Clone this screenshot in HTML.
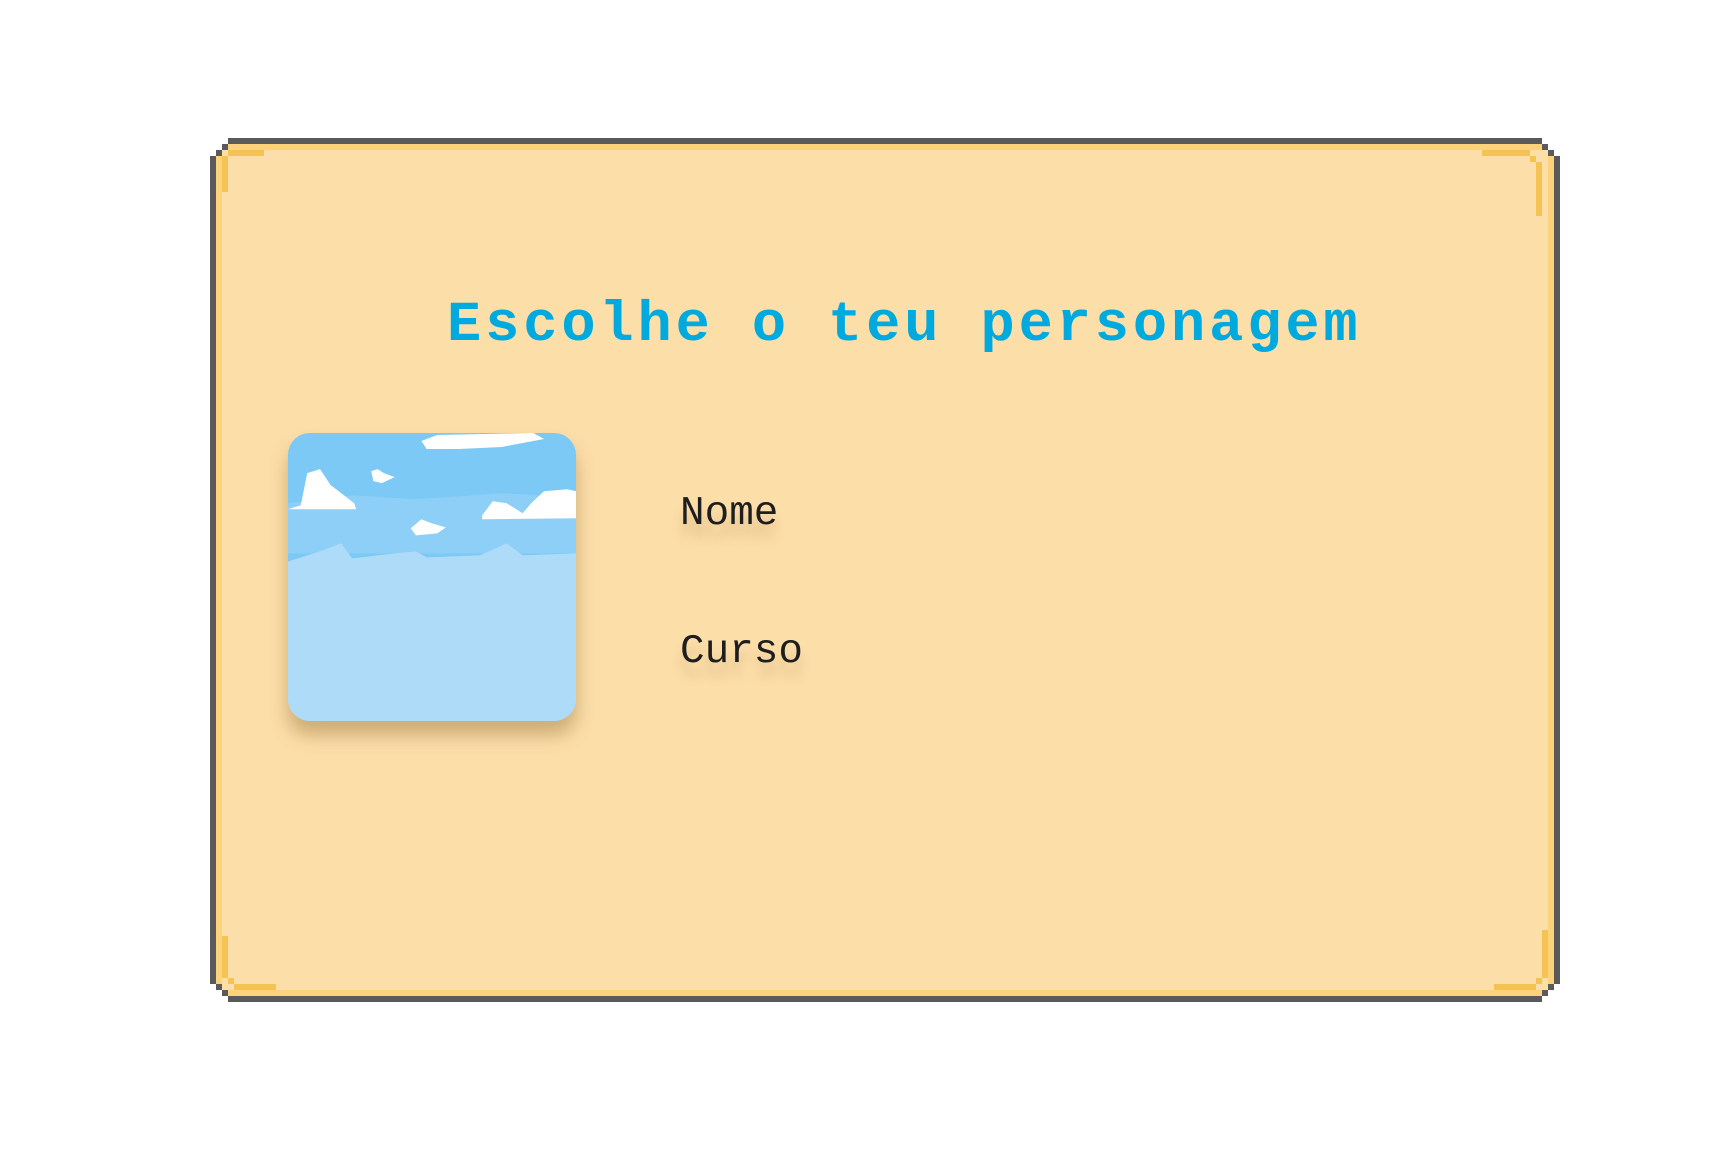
<!DOCTYPE html>
<html><head><meta charset="utf-8"><style>
html,body{margin:0;padding:0;background:#fff;width:1728px;height:1152px;overflow:hidden;position:relative;font-family:"Liberation Mono",monospace}
.card{position:absolute;left:210px;top:138px;width:1350px;height:864px;background:#5a5a5a;
clip-path:polygon(0 18px,6px 18px,6px 12px,12px 12px,12px 6px,18px 6px,18px 0,calc(100% - 18px) 0,calc(100% - 18px) 6px,calc(100% - 12px) 6px,calc(100% - 12px) 12px,calc(100% - 6px) 12px,calc(100% - 6px) 18px,100% 18px,100% calc(100% - 18px),calc(100% - 6px) calc(100% - 18px),calc(100% - 6px) calc(100% - 12px),calc(100% - 12px) calc(100% - 12px),calc(100% - 12px) calc(100% - 6px),calc(100% - 18px) calc(100% - 6px),calc(100% - 18px) 100%,18px 100%,18px calc(100% - 6px),12px calc(100% - 6px),12px calc(100% - 12px),6px calc(100% - 12px),6px calc(100% - 18px),0 calc(100% - 18px))}
.l1{position:absolute;left:6px;top:6px;right:6px;bottom:6px;background:#fdd27a;
clip-path:polygon(0 12px,6px 12px,6px 6px,12px 6px,12px 0,calc(100% - 12px) 0,calc(100% - 12px) 6px,calc(100% - 6px) 6px,calc(100% - 6px) 12px,100% 12px,100% calc(100% - 12px),calc(100% - 6px) calc(100% - 12px),calc(100% - 6px) calc(100% - 6px),calc(100% - 12px) calc(100% - 6px),calc(100% - 12px) 100%,12px 100%,12px calc(100% - 6px),6px calc(100% - 6px),6px calc(100% - 12px),0 calc(100% - 12px))}
.l2{position:absolute;left:12px;top:12px;right:12px;bottom:12px;background:#fcdea9}
.acc{position:absolute;background:#f5c354}
.title{position:absolute;left:447px;top:294px;font-size:57px;font-weight:bold;color:#00aade;letter-spacing:3.9px;white-space:nowrap}
.img{position:absolute;left:288px;top:433px;width:288px;height:288px;border-radius:22px;overflow:hidden;background:#aedcf8;box-shadow:0 14px 18px rgba(150,110,50,.45)}
.lbl{position:absolute;font-size:41px;color:#1e1e1e;text-shadow:0 14px 10px rgba(180,140,80,.35)}
</style></head><body>
<div class="card"><div class="l1"></div><div class="l2"></div></div>
<div class="acc" style="left:228px;top:150px;width:36px;height:6px"></div>
<div class="acc" style="left:222px;top:156px;width:6px;height:36px"></div>
<div class="acc" style="left:1482px;top:150px;width:48px;height:6px"></div>
<div class="acc" style="left:1530px;top:156px;width:6px;height:6px"></div>
<div class="acc" style="left:1536px;top:162px;width:6px;height:54px"></div>
<div class="acc" style="left:222px;top:936px;width:6px;height:42px"></div>
<div class="acc" style="left:228px;top:978px;width:6px;height:6px"></div>
<div class="acc" style="left:234px;top:984px;width:42px;height:6px"></div>
<div class="acc" style="left:1542px;top:930px;width:6px;height:48px"></div>
<div class="acc" style="left:1536px;top:978px;width:6px;height:6px"></div>
<div class="acc" style="left:1494px;top:984px;width:42px;height:6px"></div>
<div class="title">Escolhe o teu personagem</div>
<div class="img">
<svg width="288" height="288" viewBox="0 0 270 287" preserveAspectRatio="none">
<rect width="270" height="130" fill="#7bc9f4"/>
<path d="M0 70 L60 62 L120 66 L200 60 L270 64 L270 120 L0 120Z" fill="#8ecff7"/>
<path d="M0 128 L30 118 L50 110 L60 125 L100 120 L120 118 L130 124 L180 122 L205 110 L220 122 L270 120 L270 287 L0 287Z" fill="#aedcf8"/>
<g fill="#fff">
<path d="M125 8 L140 2 L230 0 L240 6 L200 14 L160 16 L130 16Z"/>
<path d="M0 76 L12 72 L18 40 L30 36 L40 52 L50 60 L62 70 L64 76 L0 76Z"/>
<path d="M78 38 L84 36 L90 40 L100 44 L88 50 L80 48Z"/>
<path d="M182 82 L192 68 L205 70 L220 80 L228 70 L240 58 L262 56 L270 58 L270 85 L182 86Z"/>
<path d="M115 95 L125 86 L135 90 L148 94 L140 100 L120 102Z"/>
</g></svg></div>
<div class="lbl" style="left:680px;top:491px">Nome</div>
<div class="lbl" style="left:680px;top:629px">Curso</div>
</body></html>
